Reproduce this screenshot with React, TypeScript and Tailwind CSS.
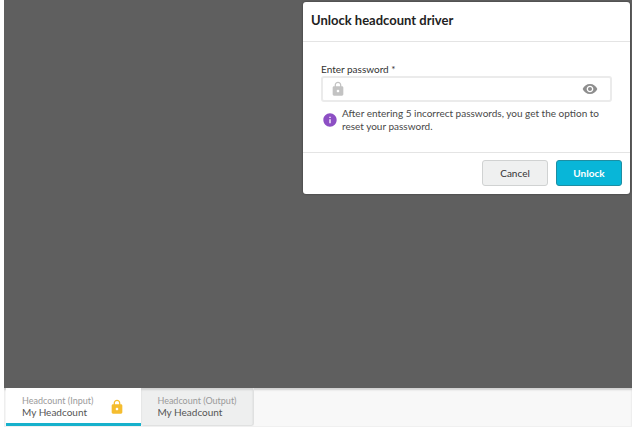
import { useState } from 'react';
import type { FormEvent } from 'react';

type Tab = {
  id: string;
  kind: string;
  name: string;
  locked: boolean;
};

const tabs: Tab[] = [
  { id: 'input', kind: 'Headcount (Input)', name: 'My Headcount', locked: true },
  { id: 'output', kind: 'Headcount (Output)', name: 'My Headcount', locked: false },
];

export default function App() {
  const [activeTab, setActiveTab] = useState('input');

  return (
    <div className="flex h-screen flex-col bg-white pr-px pb-[5px] pl-1 font-['Lato',sans-serif]">
      {/* Dimmed workspace */}
      <main className="flex min-h-0 flex-1 items-start justify-end bg-[#5f5f5f] pt-0.5 pr-0.5">
        <UnlockDialog />
      </main>

      {/* Sheet tabs */}
      <nav
        role="tablist"
        className="flex border-b border-[#f0f0f0] bg-[#f8f8f8] pl-0.5 shadow-[inset_0_2px_2px_rgba(0,0,0,0.16)]"
      >
        {tabs.map((tab) => (
          <SheetTab
            key={tab.id}
            tab={tab}
            active={tab.id === activeTab}
            onClick={() => setActiveTab(tab.id)}
          />
        ))}
      </nav>
    </div>
  );
}

function UnlockDialog() {
  const [password, setPassword] = useState('');
  const [visible, setVisible] = useState(false);

  const handleSubmit = (e: FormEvent) => {
    e.preventDefault();
  };

  return (
    <form
      role="dialog"
      aria-labelledby="unlock-title"
      onSubmit={handleSubmit}
      className="w-full max-w-[327px] rounded-[3px] bg-white shadow-[0_0_2px_rgba(0,0,0,0.5)]"
    >
      <header className="border-b border-[#e4e4e4] px-2 pt-2.5 pb-3">
        <h2 id="unlock-title" className="text-[13px] leading-[17px] font-bold text-[#222]">
          Unlock headcount driver
        </h2>
      </header>

      <div className="px-[18px] pt-5 pb-[19px]">
        <label htmlFor="password" className="block text-[10px] leading-[14px] text-[#333]">
          Enter password *
        </label>
        <div className="flex h-[26px] items-center rounded-[3px] border-2 border-[#ebebeb] pr-3 pl-[7px]">
          <LockIcon className="h-4 w-4 text-[#c3c3c3]" />
          <input
            id="password"
            type={visible ? 'text' : 'password'}
            value={password}
            onChange={(e) => setPassword(e.target.value)}
            className="min-w-0 flex-1 bg-transparent px-2 text-[10px] text-[#333] outline-none"
          />
          <button type="button" aria-label="Show password" onClick={() => setVisible(!visible)}>
            <EyeIcon className="h-4 w-4 text-[#8e8e8e]" />
          </button>
        </div>
        <div className="mt-[5px] flex items-start gap-1 pl-px">
          <InfoIcon className="mt-[5px] h-4 w-4 shrink-0 text-[#8d4fc4]" />
          <p className="text-[10px] leading-[13px] text-[#484848]">
            After entering 5 incorrect passwords, you get the option to reset your password.
          </p>
        </div>
      </div>

      <footer className="flex justify-end gap-2 border-t border-[#e4e4e4] px-2 pt-[7px] pb-2">
        <button
          type="button"
          className="h-[26px] w-[66px] rounded-[3px] border border-[#d0d2d2] bg-[#eff0f0] text-[10px] text-[#333]"
        >
          Cancel
        </button>
        <button
          type="submit"
          className="h-[26px] w-[66px] rounded-[3px] border border-[#1d8ea3] bg-[#08b6d8] text-[10px] font-bold text-white"
        >
          Unlock
        </button>
      </footer>
    </form>
  );
}

// One tab of the bottom bar
function SheetTab({
  tab,
  active,
  onClick,
}: {
  tab: Tab;
  active: boolean;
  onClick: () => void;
}) {
  return (
    <button
      type="button"
      role="tab"
      aria-selected={active}
      onClick={onClick}
      className={`flex h-[38px] items-center gap-4 px-4 text-left ${
        active
          ? 'border-b-[3px] border-[#16b1cc] bg-white pt-[3px]'
          : 'rounded-b-[3px] border-r border-b border-[#e0e1e1] bg-[#eeefef] shadow-[inset_0_2px_2px_rgba(0,0,0,0.12)]'
      }`}
    >
      <span>
        <span className="block text-[9px] leading-[11px] text-[#9a9a9a]">{tab.kind}</span>
        <span className="block text-[10px] leading-[13px] text-[#555]">{tab.name}</span>
      </span>
      {tab.locked && <LockIcon className="h-4 w-4 text-[#f5bd2f]" />}
    </button>
  );
}

function LockIcon({ className }: { className: string }) {
  return (
    <svg viewBox="0 0 24 24" fill="currentColor" aria-hidden="true" className={className}>
      <path d="M18 8h-1V6c0-2.76-2.24-5-5-5S7 3.24 7 6v2H6c-1.1 0-2 .9-2 2v10c0 1.1.9 2 2 2h12c1.1 0 2-.9 2-2V10c0-1.1-.9-2-2-2zm-6 9c-1.1 0-2-.9-2-2s.9-2 2-2 2 .9 2 2-.9 2-2 2zm3.1-9H8.9V6c0-1.71 1.39-3.1 3.1-3.1s3.1 1.39 3.1 3.1v2z" />
    </svg>
  );
}

function EyeIcon({ className }: { className: string }) {
  return (
    <svg viewBox="0 0 24 24" fill="currentColor" aria-hidden="true" className={className}>
      <path d="M12 4.5C7 4.5 2.73 7.61 1 12c1.73 4.39 6 7.5 11 7.5s9.27-3.11 11-7.5c-1.73-4.39-6-7.5-11-7.5zM12 17c-2.76 0-5-2.24-5-5s2.24-5 5-5 5 2.24 5 5-2.24 5-5 5zm0-8c-1.66 0-3 1.34-3 3s1.34 3 3 3 3-1.34 3-3-1.34-3-3-3z" />
    </svg>
  );
}

function InfoIcon({ className }: { className: string }) {
  return (
    <svg viewBox="0 0 24 24" fill="currentColor" aria-hidden="true" className={className}>
      <path d="M12 2C6.48 2 2 6.48 2 12s4.48 10 10 10 10-4.48 10-10S17.52 2 12 2zm1 15h-2v-6h2v6zm0-8h-2V7h2v2z" />
    </svg>
  );
}
